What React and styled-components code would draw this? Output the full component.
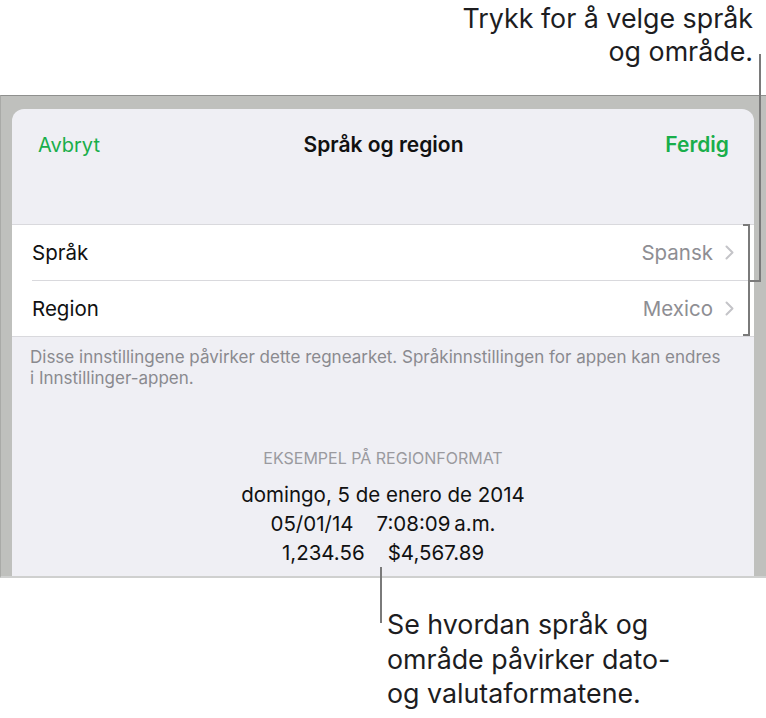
import React from 'react';
import styled, { createGlobalStyle } from 'styled-components';

const GlobalStyle = createGlobalStyle`
  html, body {
    margin: 0;
    padding: 0;
    background: #ffffff;
  }
  body {
    font-family: Inter, "Liberation Sans", Arial, sans-serif;
    -webkit-font-smoothing: antialiased;
  }
`;

const Page = styled.div`
  position: relative;
  width: 766px;
  height: 718px;
  overflow: hidden;
  display: flex;
  flex-direction: column;
  background: #fff;
`;

const Callout = styled.div`
  font-size: 26.8px;
  line-height: ${(p) => p.$lh}px;
  color: #1d1d1f;
  text-align: ${(p) => (p.$align === 'right' ? 'right' : 'left')};
  height: ${(p) => p.$height}px;
  padding: ${(p) => p.$pad};
  box-sizing: border-box;
  flex-shrink: 0;
`;

const Frame = styled.div`
  height: 483px;
  flex-shrink: 0;
  box-sizing: border-box;
  background: #bfc0bd;
  border-top: 1px solid #8f908e;
  border-left: 1px solid #a9aaa7;
  border-bottom: 2px solid #cfd0cf;
  padding: 13px 12px 0 11px;
  display: flex;
  overflow: hidden;
`;

const Sheet = styled.div`
  flex: 1;
  background: #efeff4;
  border-radius: 12px 12px 0 0;
  display: flex;
  flex-direction: column;
`;

const NavBar = styled.div`
  height: 116px;
  display: grid;
  grid-template-columns: 1fr auto 1fr;
  align-items: start;
  padding: 24px 25px 0 26px;
  box-sizing: border-box;
  border-bottom: 1px solid #d9d9dd;
`;

const NavButton = styled.span`
  font-size: ${(p) => (p.$bold ? 21 : 20)}px;
  line-height: 24px;
  color: #19ae4a;
  font-weight: ${(p) => (p.$bold ? 600 : 400)};
  justify-self: ${(p) => (p.$end ? 'end' : 'start')};
`;

const NavTitle = styled.span`
  font-size: 21px;
  line-height: 24px;
  font-weight: 600;
  color: #111;
`;

const Group = styled.div`
  background: #fff;
  border-bottom: 1px solid #d9d9dd;
`;

const Row = styled.div`
  height: 55px;
  margin-left: 20px;
  padding-right: 20px;
  display: flex;
  align-items: center;
  justify-content: space-between;
  border-bottom: ${(p) => (p.$last ? 'none' : '1px solid #d9d9dd')};
  font-size: 20.5px;
  color: #111;
`;

const Value = styled.span`
  display: flex;
  align-items: center;
  gap: 12px;
  color: #8e8e93;
`;

const Note = styled.p`
  margin: 10px 20px 0 18px;
  font-size: 17px;
  line-height: 21px;
  color: #8a8a8f;
`;

const Sample = styled.div`
  margin-top: 59px;
  display: flex;
  flex-direction: column;
  align-items: center;
`;

const SampleHeading = styled.div`
  font-size: 16px;
  line-height: 20px;
  color: #9a9a9f;
  margin-bottom: 12px;
`;

const SampleLine = styled.div`
  font-size: 20.5px;
  line-height: 29px;
  color: #111;
  white-space: pre;
`;

const Leaders = styled.svg`
  position: absolute;
  left: 0;
  top: 0;
  pointer-events: none;
`;

const Chevron = () => (
  <svg width="9" height="15" viewBox="0 0 9 15">
    <path d="M1.5 1.5 L7.5 7.5 L1.5 13.5" fill="none" stroke="#c4c4c8" strokeWidth="2" strokeLinecap="round" strokeLinejoin="round" />
  </svg>
);

const settings = [
  { label: 'Språk', value: 'Spansk' },
  { label: 'Region', value: 'Mexico' },
];

export default function App() {
  return (
    <Page>
      <GlobalStyle />
      <Callout $align="right" $height={95} $lh={33} $pad="2px 13px 0 0">
        Trykk for å velge språk
        <br />
        og område.
      </Callout>
      <Frame>
        <Sheet>
          <NavBar>
            <NavButton>Avbryt</NavButton>
            <NavTitle>Språk og region</NavTitle>
            <NavButton $bold $end>Ferdig</NavButton>
          </NavBar>
          <Group>
            {settings.map((s, i) => (
              <Row key={s.label} $last={i === settings.length - 1}>
                <span>{s.label}</span>
                <Value>
                  {s.value}
                  <Chevron />
                </Value>
              </Row>
            ))}
          </Group>
          <Note>
            Disse innstillingene påvirker dette regnearket. Språkinnstillingen for appen kan endres
            <br />
            i Innstillinger-appen.
          </Note>
          <Sample>
            <SampleHeading>EKSEMPEL PÅ REGIONFORMAT</SampleHeading>
            <SampleLine>domingo, 5 de enero de 2014</SampleLine>
            <SampleLine>{'05/01/14    7:08:09\u2009a.m.'}</SampleLine>
            <SampleLine>{'1,234.56    $4,567.89'}</SampleLine>
          </Sample>
        </Sheet>
      </Frame>
      <Callout $height={140} $lh={34.5} $pad="29px 0 0 387px">
        Se hvordan språk og
        <br />
        område påvirker dato-
        <br />
        og valutaformatene.
      </Callout>
      <Leaders width="766" height="718">
        <g fill="none" stroke="#7a7a7a" strokeWidth="2">
          <path d="M760 54 V281 H749" />
          <path d="M743 225 H749 V335 H743" />
          <path d="M381 567 V623" />
        </g>
      </Leaders>
    </Page>
  );
}
